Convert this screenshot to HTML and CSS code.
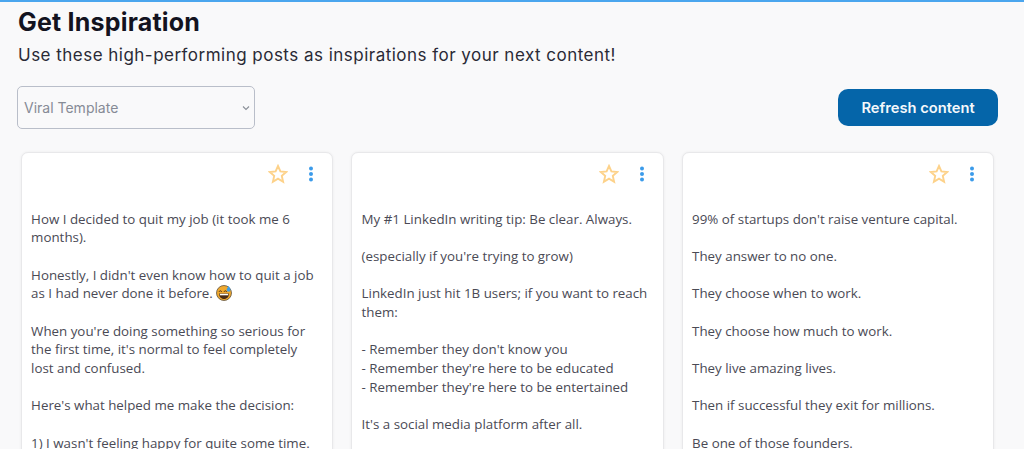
FILE: index.html
```html
<!DOCTYPE html>
<html lang="en">
<head>
    <meta charset="UTF-8">
    <title>Get Inspiration</title>
    <link rel="stylesheet" href="styles.css">
</head>
<body>
    <div class="page">
        <h1>Get Inspiration</h1>
        <p class="subtitle">Use these high-performing posts as inspirations for your next content!</p>
        <div class="toolbar">
            <div class="select">
                <span>Viral Template</span>
                <svg width="8" height="6" viewBox="0 0 8 6"><path d="M1 1.5l3 3 3-3" fill="none" stroke="#8a8f98" stroke-width="1.1"/></svg>
            </div>
            <button class="refresh">Refresh content</button>
        </div>
        <div class="cards">
            <div class="card">
                <div class="card-actions">
                    <svg class="star" width="20" height="20" viewBox="0 0 20 20"><path d="M10 2l2.4 5.4 5.8.6-4.4 3.9 1.3 5.8-5.100-3-5.100 3 1.300-5.800L1.800 8l5.800-.6z" fill="none" stroke="#fdd28a" stroke-width="1.9"/></svg>
                    <svg class="dots" width="6" height="16" viewBox="0 0 6 16"><circle cx="3" cy="2.5" r="2" fill="#3b9bea"/><circle cx="3" cy="8" r="2" fill="#3b9bea"/><circle cx="3" cy="13.5" r="2" fill="#3b9bea"/></svg>
                </div>
                <div class="post">
                    <p>How I decided to quit my job (it took me 6 months).</p>
                    <p>Honestly, I didn't even know how to quit a job as I had never done it before.
                        <svg class="emoji" width="16" height="16" viewBox="0 0 16 16"><circle cx="8" cy="8" r="7.5" fill="#f0a92e" stroke="#5e5340" stroke-width="0.8"/><path d="M3 8.5h10c0 3.2-2 5.5-5 5.5s-5-2.300-5-5.500z" fill="#4a2c14"/><path d="M3.800 8.800h8.400v1.500H3.800z" fill="#fff"/><path d="M3 6.800c.6-1.300 2-1.300 2.800 0M8 6.800c.6-1.300 2-1.300 2.800 0" stroke="#4a2c14" stroke-width="1" fill="none"/><path d="M12.600 1c-1.200 1.800-1.900 2.800-1.900 3.800a1.900 1.900 0 0 0 3.800 0c0-1-.7-2-1.900-3.800z" fill="#3f9ee6"/></svg>
                    </p>
                    <p>When you're doing something so serious for the first time, it's normal to feel completely lost and confused.</p>
                    <p>Here's what helped me make the decision:</p>
                    <p>1) I wasn't feeling happy for quite some time.</p>
                </div>
            </div>
            <div class="card">
                <div class="card-actions">
                    <svg class="star" width="20" height="20" viewBox="0 0 20 20"><path d="M10 2l2.4 5.4 5.8.6-4.4 3.9 1.3 5.8-5.100-3-5.100 3 1.300-5.800L1.800 8l5.800-.6z" fill="none" stroke="#fdd28a" stroke-width="1.9"/></svg>
                    <svg class="dots" width="6" height="16" viewBox="0 0 6 16"><circle cx="3" cy="2.5" r="2" fill="#3b9bea"/><circle cx="3" cy="8" r="2" fill="#3b9bea"/><circle cx="3" cy="13.5" r="2" fill="#3b9bea"/></svg>
                </div>
                <div class="post">
                    <p>My #1 LinkedIn writing tip: Be clear. Always.</p>
                    <p>(especially if you're trying to grow)</p>
                    <p>LinkedIn just hit 1B users; if you want to reach them:</p>
                    <p>- Remember they don't know you<br>- Remember they're here to be educated<br>- Remember they're here to be entertained</p>
                    <p>It's a social media platform after all.</p>
                </div>
            </div>
            <div class="card">
                <div class="card-actions">
                    <svg class="star" width="20" height="20" viewBox="0 0 20 20"><path d="M10 2l2.4 5.4 5.8.6-4.4 3.9 1.3 5.8-5.100-3-5.100 3 1.300-5.800L1.800 8l5.800-.6z" fill="none" stroke="#fdd28a" stroke-width="1.9"/></svg>
                    <svg class="dots" width="6" height="16" viewBox="0 0 6 16"><circle cx="3" cy="2.5" r="2" fill="#3b9bea"/><circle cx="3" cy="8" r="2" fill="#3b9bea"/><circle cx="3" cy="13.5" r="2" fill="#3b9bea"/></svg>
                </div>
                <div class="post">
                    <p>99% of startups don't raise venture capital.</p>
                    <p>They answer to no one.</p>
                    <p>They choose when to work.</p>
                    <p>They choose how much to work.</p>
                    <p>They live amazing lives.</p>
                    <p>Then if successful they exit for millions.</p>
                    <p>Be one of those founders.</p>
                </div>
            </div>
        </div>
    </div>
</body>
</html>
```

FILE: styles.css
```css
html, body {
    height: 100%;
    overflow: hidden;
}
body {
    margin: 0;
    background-color: #f9f9fa;
    border-top: 2px solid #4ba6ee;
    box-sizing: border-box;
    font-family: Inter, 'Noto Sans', sans-serif;
    color: #1c1c28;
}
.page {
    padding: 5px 26px 0 17px;
}
h1 {
    margin: 0 0 0 1px;
    font-size: 25px;
    line-height: 30px;
    font-weight: 700;
    letter-spacing: 0.2px;
    color: #13131f;
}
.subtitle {
    margin: 6px 0 0 1px;
    font-size: 17px;
    line-height: 24px;
    letter-spacing: 0.48px;
    color: #2a2a36;
}
.toolbar {
    display: flex;
    justify-content: space-between;
    align-items: center;
    margin-top: 19px;
}
.select {
    display: flex;
    justify-content: space-between;
    align-items: center;
    width: 238px;
    height: 43px;
    box-sizing: border-box;
    padding: 0 4px 0 6px;
    border: 1px solid #b9bec9;
    border-radius: 5px;
    font-size: 14px;
    color: #868b96;
}
.refresh {
    width: 160px;
    height: 37px;
    border: none;
    border-radius: 10px;
    background-color: #0565a9;
    color: #f4f8fb;
    font-family: inherit;
    font-size: 14.7px;
    font-weight: 600;
}
.cards {
    display: grid;
    grid-template-columns: repeat(3, 312.5px);
    gap: 18px;
    margin: 23px 0 0 3.6px;
}
.card {
    height: 320px;
    background-color: #fff;
    border: 1px solid #e8e8ea;
    border-radius: 7px;
    box-shadow: 0 0 3px rgba(0, 0, 0, 0.06);
    box-sizing: border-box;
    padding: 0 14px 0 9.5px;
}
.card-actions {
    display: flex;
    justify-content: flex-end;
    align-items: center;
    gap: 20px;
    height: 42px;
    padding-right: 4px;
}
.post {
    margin-top: 14.5px;
    font-family: 'Open Sans', sans-serif;
    font-size: 13.33px;
    line-height: 18.7px;
    color: #4a4a55;
}
.post p {
    margin: 0 0 18.7px;
}
.emoji {
    vertical-align: -3px;
}
```
